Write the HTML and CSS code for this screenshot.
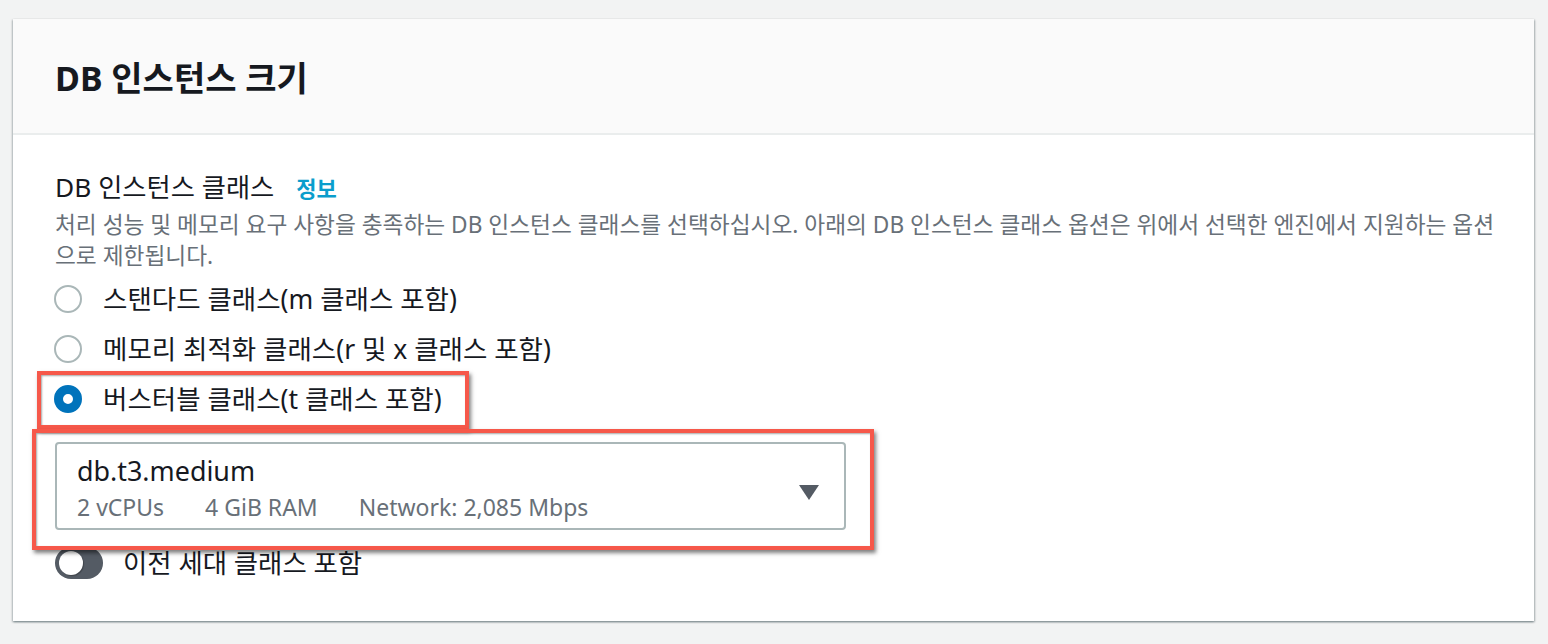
FILE: index.html
```html
<!DOCTYPE html>
<html lang="ko">
<head>
<meta charset="utf-8">
<title>DB 인스턴스 크기</title>
<link rel="stylesheet" href="styles.css">
</head>
<body>
<section class="card">
  <header class="card-header">
    <h2 class="card-title">DB 인스턴스 크기</h2>
  </header>
  <div class="card-body">
    <div class="field-label">
      <span class="label-text">DB 인스턴스 클래스</span>
      <a class="info-link" href="#">정보</a>
    </div>
    <p class="field-desc">처리 성능 및 메모리 요구 사항을 충족하는 DB 인스턴스 클래스를 선택하십시오. 아래의 DB 인스턴스 클래스 옵션은 위에서 선택한 엔진에서 지원하는 옵션<br>으로 제한됩니다.</p>
    <div class="radio-group">
      <label class="radio-row">
        <span class="radio"></span>
        <span class="radio-text">스탠다드 클래스(m 클래스 포함)</span>
      </label>
      <label class="radio-row">
        <span class="radio"></span>
        <span class="radio-text">메모리 최적화 클래스(r 및 x 클래스 포함)</span>
      </label>
      <div class="radio-line">
        <label class="radio-row annot annot-radio">
          <span class="radio checked"></span>
          <span class="radio-text">버스터블 클래스(t 클래스 포함)</span>
        </label>
      </div>
    </div>
    <div class="select annot annot-select">
      <div class="select-main">
        <div class="select-value">db.t3.medium</div>
        <div class="select-meta">
          <span>2 vCPUs</span>
          <span>4 GiB RAM</span>
          <span>Network: 2,085 Mbps</span>
        </div>
      </div>
      <svg class="caret" width="20" height="15" viewBox="0 0 20 15" aria-hidden="true"><polygon points="0,0 20,0 10,15" fill="#545b64"/></svg>
    </div>
    <label class="toggle-row">
      <span class="toggle"><span class="knob"></span></span>
      <span class="toggle-text">이전 세대 클래스 포함</span>
    </label>
  </div>
</section>
</body>
</html>
```
FILE: styles.css
```css
* { box-sizing: border-box; }
html, body { margin: 0; padding: 0; }
body {
  background: #f2f3f3;
  padding: 19px 14px 21px 13px;
  font-family: "Noto Sans", "Noto Sans CJK KR", sans-serif;
  color: #16191f;
}
.card {
  width: 1521px;
  background: #fff;
  border-top: 1px solid #eaeded;
  box-shadow: 0 1px 2px rgba(0, 28, 36, 0.35), 1px 1px 2px rgba(0, 28, 36, 0.2), -1px 1px 2px rgba(0, 28, 36, 0.15);
}
.card-header {
  height: 116px;
  background: #fafafa;
  border-bottom: 2px solid #eaeded;
  padding: 4px 42px 0 42px;
  display: flex;
  align-items: center;
  margin-top: -1px;
}
.card-title {
  margin: 0;
  font-size: 34px;
  font-weight: 700;
  line-height: 40px;
  color: #16191f;
}
.card-body {
  padding: 34px 42px 42px 42px;
}
.field-label {
  display: flex;
  align-items: center;
  height: 36px;
}
.label-text {
  font-size: 26.3px;
  line-height: 36px;
}
.info-link {
  margin-left: 22px;
  font-size: 22px;
  font-weight: 700;
  color: #0a9dcc;
  text-decoration: none;
}
.field-desc {
  margin: 4px 0 0 0;
  font-size: 22.7px;
  line-height: 31px;
  color: #687078;
  white-space: nowrap;
}
.radio-group {
  margin-top: 3px;
}
.radio-row {
  display: flex;
  align-items: center;
  height: 50px;
}
.radio-line .radio-row { display: inline-flex; }
.radio-line { height: 50px; }
.radio {
  width: 28px;
  height: 28px;
  border-radius: 50%;
  border: 2px solid #aab7b8;
  background: #fff;
  margin-left: -1px;
  flex: none;
}
.radio.checked {
  border: 9px solid #0073bb;
}
.radio-text {
  margin-left: 21px;
  font-size: 26.5px;
  line-height: 36px;
  color: #16191f;
}
.annot { position: relative; }
.annot::after {
  content: "";
  position: absolute;
  border: 4px solid #f6584a;
  box-shadow: 2px 3px 4px rgba(0, 0, 0, 0.5), inset 1px 1px 2px rgba(0, 0, 0, 0.35);
  pointer-events: none;
}
.annot-radio::after {
  left: -18px;
  top: -3px;
  width: 424px;
  height: 50px;
}
.select {
  margin-top: 18px;
  width: 791px;
  height: 88px;
  border: 2px solid #aab7b8;
  border-radius: 4px;
  display: flex;
  align-items: flex-start;
  justify-content: space-between;
  padding: 12px 25px 0 20px;
}
.annot-select::after {
  left: -25px;
  top: -15px;
  width: 834px;
  height: 113px;
}
.select-main {
  display: flex;
  flex-direction: column;
}
.select-value {
  font-size: 26.9px;
  line-height: 30px;
  color: #16191f;
}
.select-meta {
  margin-top: 7px;
  display: flex;
  gap: 41px;
  font-size: 23px;
  line-height: 28px;
  color: #687078;
}
.caret { flex: none; align-self: center; margin-top: 0; }
.toggle-row {
  margin-top: 17px;
  display: flex;
  align-items: center;
  height: 32px;
}
.toggle {
  width: 48px;
  height: 32px;
  border-radius: 16px;
  background: #545b64;
  display: flex;
  align-items: center;
  padding-left: 4px;
  flex: none;
}
.knob {
  width: 24px;
  height: 24px;
  border-radius: 50%;
  background: #fff;
  box-shadow: 1px 1px 1px rgba(0, 0, 0, 0.25);
}
.toggle-text {
  margin-left: 20px;
  font-size: 26.4px;
  line-height: 32px;
  color: #16191f;
}
```
